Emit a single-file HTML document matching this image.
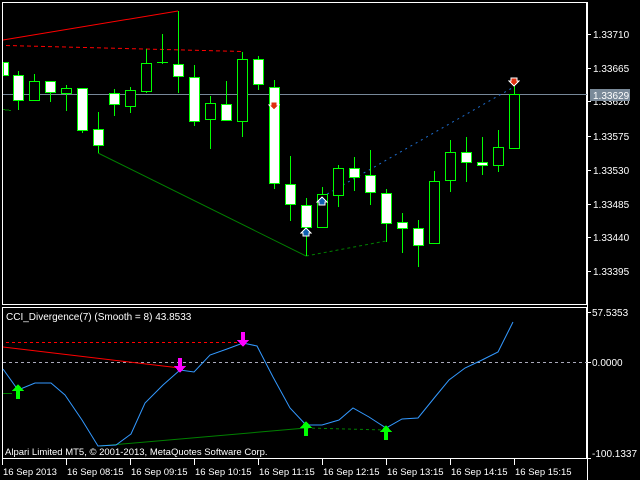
<!DOCTYPE html>
<html><head><meta charset="utf-8"><style>
html,body{margin:0;padding:0;background:#000;width:640px;height:480px;overflow:hidden}
svg{display:block}
text{font-family:"Liberation Sans",sans-serif;font-size:10px;fill:#fff}
.s{font-size:9.5px}
</style></head><body>
<svg id="s" width="640" height="480" viewBox="0 0 640 480" shape-rendering="crispEdges">
<rect x="0" y="0" width="640" height="480" fill="#000"/>
<rect x="2.5" y="2.5" width="584" height="302" fill="none" stroke="#fff"/>
<rect x="2.5" y="307.5" width="584" height="151" fill="none" stroke="#fff"/>
<line x1="3" y1="94.5" x2="587" y2="94.5" stroke="#778899"/>
<line x1="3" y1="40" x2="178" y2="11" stroke="#f00" shape-rendering="auto"/>
<line x1="6" y1="45.5" x2="243" y2="51.5" stroke="#f00" stroke-dasharray="4,3" shape-rendering="auto"/>
<line x1="98" y1="153" x2="306" y2="256" stroke="#008000" shape-rendering="auto"/>
<line x1="3" y1="109.5" x2="11" y2="110.5" stroke="#008000"/>
<line x1="306" y1="256" x2="386" y2="241" stroke="#008000" stroke-dasharray="3,3" shape-rendering="auto"/>
<line x1="322" y1="197" x2="512" y2="88" stroke="#1e6ed0" stroke-dasharray="2,4" shape-rendering="auto"/>
<g id="c"></g>
<path d="M271 102h6v3h2l-5 5-5-5h2z" fill="#e03010" stroke="#fff" stroke-width="0.8"/>
<path d="M511 78h6v3h2l-5 5-5-5h2z" fill="#e03010" stroke="#fff" stroke-width="1"/>
<path d="M306 228l5 5h-2v3h-6v-3h-2z" fill="#1060b0" stroke="#fff" stroke-width="1"/>
<path d="M322 197l5 5h-2v3h-6v-3h-2z" fill="#1060b0" stroke="#fff" stroke-width="1"/>
<line x1="587.5" y1="2" x2="587.5" y2="480" stroke="#fff"/>
<g stroke="#fff">
<line x1="587" y1="34.5" x2="591" y2="34.5"/><line x1="587" y1="68.5" x2="591" y2="68.5"/><line x1="587" y1="101.5" x2="591" y2="101.5"/><line x1="587" y1="136.5" x2="591" y2="136.5"/><line x1="587" y1="170.5" x2="591" y2="170.5"/><line x1="587" y1="204.5" x2="591" y2="204.5"/><line x1="587" y1="237.5" x2="591" y2="237.5"/><line x1="587" y1="271.5" x2="591" y2="271.5"/>
<line x1="587" y1="312.5" x2="591" y2="312.5"/><line x1="587" y1="362.5" x2="591" y2="362.5"/><line x1="587" y1="458.5" x2="591" y2="458.5"/>
</g>
<text x="593" y="38">1.33710</text>
<text x="593" y="72">1.33665</text>
<text x="593" y="105">1.33620</text>
<rect x="590" y="89" width="40" height="12" fill="#7a8a99"/>
<text x="593" y="99">1.33629</text>
<text x="593" y="140">1.33575</text>
<text x="593" y="174">1.33530</text>
<text x="593" y="208">1.33485</text>
<text x="593" y="241">1.33440</text>
<text x="593" y="275">1.33395</text>
<text x="592" y="316">57.5353</text>
<text x="592" y="366">0.0000</text>
<text x="592" y="457">-100.1337</text>
<line x1="3" y1="362.5" x2="587" y2="362.5" stroke="#aab" stroke-dasharray="3,3"/>
<line x1="3" y1="347" x2="180" y2="368" stroke="#f00" shape-rendering="auto"/>
<line x1="6" y1="342.5" x2="243" y2="342.5" stroke="#f00" stroke-dasharray="3,3"/>
<line x1="100" y1="446" x2="306" y2="428" stroke="#008000" shape-rendering="auto"/>
<line x1="3" y1="393.5" x2="12" y2="393.5" stroke="#008000"/>
<line x1="306" y1="428" x2="386" y2="430" stroke="#008000" stroke-dasharray="3,3" shape-rendering="auto"/>
<polyline fill="none" stroke="#3399ff" shape-rendering="auto" points="3,369 18,390 35,383 51,383 65,395 82,420 98,446 116,445 131,434 145,403 163,385 180,370 194,372 210,355 227,349 243,343 257,346 273,377 290,408 306,425 322,425 339,420 353,408 369,417 386,428 402,419 418,418 435,397 449,380 465,368 482,360 498,352 513,322"/>
<g fill="#00ff00">
<path d="M18 384l6 7h-4v8h-4v-8h-4z"/>
<path d="M306 421l6 7h-4v8h-4v-8h-4z"/>
<path d="M386 425l6 7h-4v8h-4v-8h-4z"/>
</g>
<g fill="#ff00ff">
<path d="M180 373l6-7h-4v-8h-4v8h-4z"/>
<path d="M243 347l6-7h-4v-8h-4v8h-4z"/>
</g>
<text x="6" y="320">CCI_Divergence(7) (Smooth = 8)  43.8533</text>
<text class="s" x="5" y="455">Alpari Limited MT5, © 2001-2013, MetaQuotes Software Corp.</text>
<g stroke="#fff">
<line x1="2.5" y1="459" x2="2.5" y2="465"/><line x1="66.5" y1="459" x2="66.5" y2="465"/><line x1="130.5" y1="459" x2="130.5" y2="465"/><line x1="194.5" y1="459" x2="194.5" y2="465"/><line x1="258.5" y1="459" x2="258.5" y2="465"/><line x1="322.5" y1="459" x2="322.5" y2="465"/><line x1="386.5" y1="459" x2="386.5" y2="465"/><line x1="450.5" y1="459" x2="450.5" y2="465"/><line x1="514.5" y1="459" x2="514.5" y2="465"/>
</g>
<text class="s" x="3" y="475">16 Sep 2013</text>
<text class="s" x="67" y="475">16 Sep 08:15</text>
<text class="s" x="131" y="475">16 Sep 09:15</text>
<text class="s" x="195" y="475">16 Sep 10:15</text>
<text class="s" x="259" y="475">16 Sep 11:15</text>
<text class="s" x="323" y="475">16 Sep 12:15</text>
<text class="s" x="387" y="475">16 Sep 13:15</text>
<text class="s" x="451" y="475">16 Sep 14:15</text>
<text class="s" x="515" y="475">16 Sep 15:15</text>
</svg>
<script>
var C=[[3,62,75,62,75,1],[18,75,100,71,110,1],[34,81,100,74,100,0],[50,81,92,81,102,1],[66,88,93,85,111,0],[82,88,130,88,133,1],[98,129,145,112,153,1],[114,93,104,89,116,1],[130,90,106,87,113,0],[146,63,91,49,93,0],[162,62,62,34,64,2],[178,64,76,11,93,1],[194,77,121,65,126,1],[210,103,119,96,149,0],[226,104,120,81,121,1],[242,59,121,52,137,0],[258,59,84,56,90,1],[274,87,183,80,189,1],[290,184,204,156,221,1],[306,205,227,198,256,1],[322,194,227,187,227,0],[338,168,195,165,207,0],[354,168,177,157,191,1],[370,175,192,150,205,1],[386,193,223,189,242,1],[402,222,228,213,253,1],[418,228,245,220,267,1],[434,181,243,171,243,0],[450,152,180,140,192,0],[466,152,162,137,182,1],[482,162,165,137,175,1],[498,147,165,130,172,0],[514,94,148,83,149,0]];
var g=document.getElementById('c'),h='';
C.forEach(function(c){var x=c[0];
h+='<line x1="'+(x+.5)+'" y1="'+c[3]+'" x2="'+(x+.5)+'" y2="'+c[4]+'" stroke="#0f0"/>';
if(c[5]==2){h+='<line x1="'+(x-5)+'" y1="'+(c[1]+.5)+'" x2="'+(x+6)+'" y2="'+(c[1]+.5)+'" stroke="#0f0"/>';}
else{var l=Math.max(3,x-5);h+='<rect x="'+(l+.5)+'" y="'+(c[1]+.5)+'" width="'+(x+5-l)+'" height="'+(c[2]-c[1])+'" fill="'+(c[5]?'#fff':'#000')+'" stroke="#0f0"/>';}
});
g.innerHTML=h;
</script>
</body></html>
